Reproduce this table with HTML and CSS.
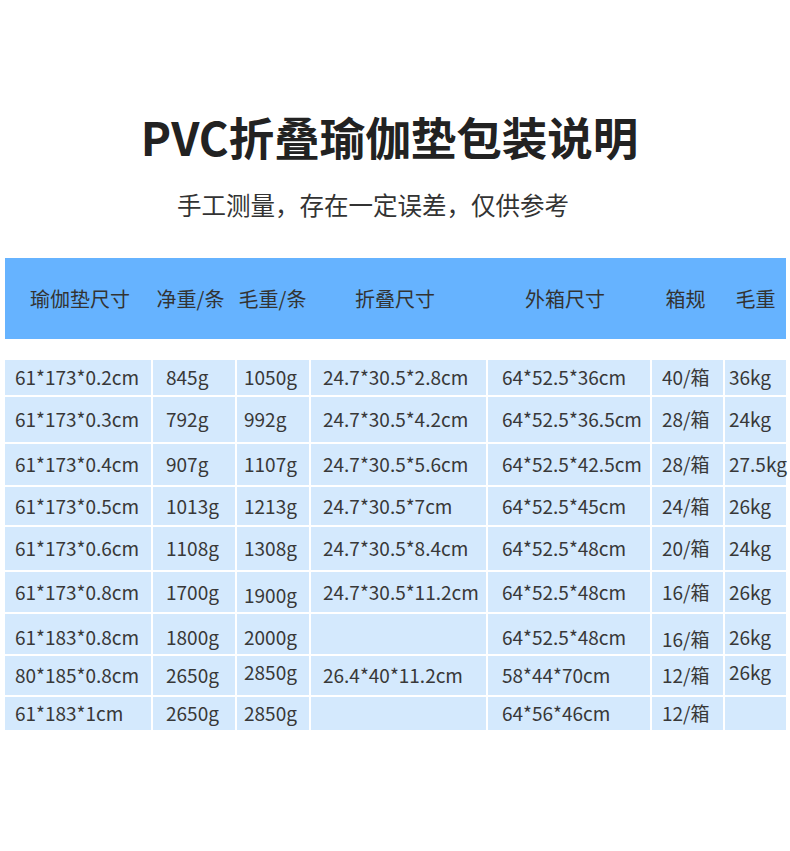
FILE: index.html
```html
<!DOCTYPE html>
<html lang="zh-CN">
<head>
<meta charset="utf-8">
<title>PVC折叠瑜伽垫包装说明</title>
<link rel="stylesheet" href="styles.css">
</head>
<body>
<div class="page">
  <h1 class="title">PVC折叠瑜伽垫包装说明</h1>
  <p class="subtitle">手工测量，存在一定误差，仅供参考</p>

  <div class="head">
    <div class="h h1">瑜伽垫尺寸</div>
    <div class="h h2">净重/条</div>
    <div class="h h3">毛重/条</div>
    <div class="h h4">折叠尺寸</div>
    <div class="h h5">外箱尺寸</div>
    <div class="h h6">箱规</div>
    <div class="h h7">毛重</div>
  </div>

  <div class="grid">
    <div class="c c1">61*173*0.2cm</div><div class="c c2">845g</div><div class="c c3">1050g</div><div class="c c4">24.7*30.5*2.8cm</div><div class="c c5">64*52.5*36cm</div><div class="c c6">40/箱</div><div class="c c7">36kg</div>
    <div class="c c1">61*173*0.3cm</div><div class="c c2">792g</div><div class="c c3">992g</div><div class="c c4">24.7*30.5*4.2cm</div><div class="c c5">64*52.5*36.5cm</div><div class="c c6">28/箱</div><div class="c c7">24kg</div>
    <div class="c c1">61*173*0.4cm</div><div class="c c2">907g</div><div class="c c3">1107g</div><div class="c c4">24.7*30.5*5.6cm</div><div class="c c5">64*52.5*42.5cm</div><div class="c c6">28/箱</div><div class="c c7">27.5kg</div>
    <div class="c c1">61*173*0.5cm</div><div class="c c2">1013g</div><div class="c c3">1213g</div><div class="c c4">24.7*30.5*7cm</div><div class="c c5">64*52.5*45cm</div><div class="c c6">24/箱</div><div class="c c7">26kg</div>
    <div class="c c1">61*173*0.6cm</div><div class="c c2">1108g</div><div class="c c3">1308g</div><div class="c c4">24.7*30.5*8.4cm</div><div class="c c5">64*52.5*48cm</div><div class="c c6">20/箱</div><div class="c c7">24kg</div>
    <div class="c c1">61*173*0.8cm</div><div class="c c2">1700g</div><div class="c c3 low">1900g</div><div class="c c4">24.7*30.5*11.2cm</div><div class="c c5">64*52.5*48cm</div><div class="c c6">16/箱</div><div class="c c7">26kg</div>
    <div class="c c1 low">61*183*0.8cm</div><div class="c c2 low">1800g</div><div class="c c3 low">2000g</div><div class="c c4"></div><div class="c c5 low">64*52.5*48cm</div><div class="c c6 lower">16/箱</div><div class="c c7 low">26kg</div>
    <div class="c c1">80*185*0.8cm</div><div class="c c2">2650g</div><div class="c c3 high">2850g</div><div class="c c4">26.4*40*11.2cm</div><div class="c c5">58*44*70cm</div><div class="c c6">12/箱</div><div class="c c7 high">26kg</div>
    <div class="c c1">61*183*1cm</div><div class="c c2">2650g</div><div class="c c3">2850g</div><div class="c c4"></div><div class="c c5">64*56*46cm</div><div class="c c6">12/箱</div><div class="c c7"></div>
  </div>
</div>
</body>
</html>
```
FILE: styles.css
```css
html, body {
  margin: 0;
  padding: 0;
  background: #ffffff;
  overflow-x: hidden;
}

.page {
  width: 790px;
  font-family: "Noto Sans CJK SC", "Noto Sans", sans-serif;
  color: #333333;
}

.title {
  margin: 107px 0 0;
  height: 58px;
  line-height: 58px;
  font-size: 45.5px;
  font-weight: 700;
  color: #222222;
  text-align: center;
  padding-right: 11px;
}

.subtitle {
  margin: 24px 0 0;
  height: 32px;
  line-height: 32px;
  font-size: 24.5px;
  color: #333333;
  text-align: center;
  padding-right: 44px;
}

.head,
.grid {
  display: grid;
  grid-template-columns: 146px 82px 72px 175px 162px 71px 61px;
  column-gap: 2px;
  margin-left: 5px;
  width: 781px;
}

.head {
  margin-top: 37px;
  height: 81px;
  background: #66b3ff;
  font-size: 20px;
  color: #333333;
}

.h {
  display: flex;
  align-items: center;
  justify-content: center;
  white-space: nowrap;
}

.h1 { padding-left: 4px; }
.h2 { padding-right: 7px; }
.h3 { padding-right: 1px; }
.h4 { padding-right: 7px; }
.h5 { padding-right: 8px; }
.h6 { padding-right: 4px; }

.grid {
  margin-top: 21px;
  row-gap: 2px;
  grid-template-rows: 35px 45px 41px 38px 43px 40px 40px 39px 33px;
}

.c {
  background: #d4e9fd;
  font-size: 19px;
  display: flex;
  align-items: center;
  white-space: nowrap;
  color: #383838;
  padding-bottom: 2px;
}

.c1 { padding-left: 10px; }
.c2 { padding-left: 13px; }
.c3 { padding-left: 7px; }
.c4 { padding-left: 12px; }
.c5 { padding-left: 14px; }
.c6 { padding-left: 10px; }
.c7 { padding-left: 4px; }

.low { padding-top: 5px; padding-bottom: 0; }
.lower { padding-top: 8px; padding-bottom: 0; }
.high { padding-bottom: 8px; }
```
